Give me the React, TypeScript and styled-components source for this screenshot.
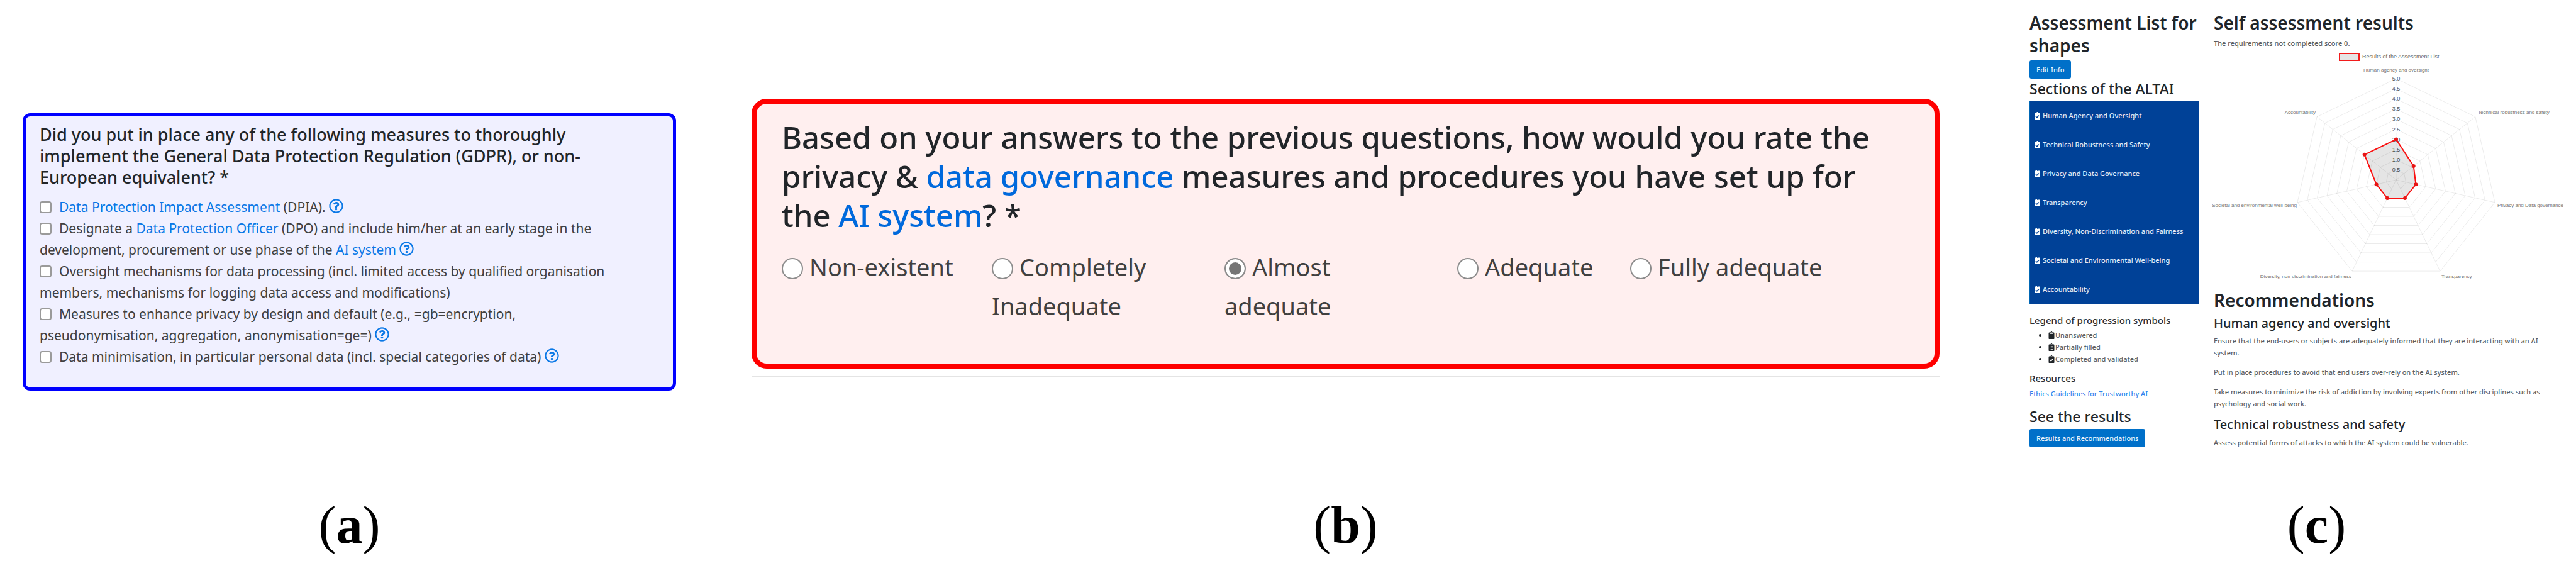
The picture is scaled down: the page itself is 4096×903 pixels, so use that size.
import React from "react";
import styled, { createGlobalStyle } from "styled-components";
import {
  FaClipboard,
  FaClipboardCheck,
  FaClipboardList,
  FaRegQuestionCircle,
} from "react-icons/fa";

const GlobalStyle = createGlobalStyle`
  *, *::before, *::after { box-sizing: border-box; }
  body {
    margin: 0;
    background: #fff;
    color: #404040;
    font-family: "Noto Sans", "Open Sans", sans-serif;
  }
  h1, h2, h3, h4, p, ul, figure, fieldset { margin: 0; padding: 0; }
  button { font-family: inherit; }
`;

/* ---------- page ---------- */

const Page = styled.main`
  display: grid;
  grid-template-columns: 1111fr 2057fr 928fr;
  min-height: 100vh;
`;

const Figure = styled.figure`
  display: flex;
  flex-direction: column;
`;

const QuestionFigure = styled(Figure)`
  && { padding: 180px 36px 20px; }
`;

const RatingFigure = styled(Figure)`
  && { padding: 157px 84px 20px; }
`;

const ResultsFigure = styled(Figure)`
  && { padding: 18px 0 20px 59px; }
`;

const Caption = styled.figcaption<{ $indent?: number }>`
  margin-top: auto;
  padding-left: ${(p) => p.$indent ?? 0}px;
  color: #000;
  font-family: "Liberation Serif", serif;
  font-size: 84px;
  line-height: 96px;
  text-align: center;
`;

/* ---------- question cards ---------- */

const Card = styled.fieldset`
  min-width: 0;
  border-style: solid;
`;

const MeasuresCard = styled(Card)`
  && { padding: 12px 22px 32px; }
  border: 5px solid #0000ff;
  border-radius: 12px;
  background: #f0f0ff;
`;

const RatingCard = styled(Card)`
  && { padding: 22px 36px 61px 40px; }
  border: 8px solid #ff0000;
  border-radius: 24px;
  background: #ffefef;
`;

const CardLink = styled.a`
  color: #0a78e6;
  text-decoration: none;
`;

const MeasuresTitle = styled.h2`
  color: #212529;
  font-size: 27px;
  font-weight: 500;
  line-height: 34px;
`;

const MeasureList = styled.div`
  margin-top: 13px;
  font-size: 21px;
  font-weight: 450;
  line-height: 34px;
`;

const CheckBox = styled.input`
  appearance: none;
  width: 19px;
  height: 19px;
  margin: 0 12px 0 0;
  border: 2px solid #9a9a9a;
  border-radius: 4px;
  background: #fff;
  vertical-align: -2px;
`;

const HelpButton = styled.button`
  width: 23px;
  height: 23px;
  padding: 0;
  border: 0;
  background: none;
  color: #0a78e6;
  font-size: 23px;
  line-height: 0;
  vertical-align: -2px;
`;

const RatingTitle = styled.h2`
  color: #212529;
  font-size: 49px;
  font-weight: 500;
  line-height: 62px;
  a { color: #0069dc; }
`;

const RatingOptions = styled.div`
  display: grid;
  grid-template-columns: 334fr 370fr 370fr 275fr 448fr;
  margin-top: 20px;
  font-size: 38px;
  font-weight: 450;
  line-height: 62px;
`;

const Radio = styled.input`
  appearance: none;
  width: 34px;
  height: 34px;
  margin: 0 10px 0 0;
  border: 2px solid #8c8c8c;
  border-radius: 50%;
  background: #fff;
  vertical-align: -5px;
  &:checked {
    background: #757575;
    box-shadow: inset 0 0 0 5px #fff;
  }
`;

const Rule = styled.hr`
  width: 100%;
  height: 2px;
  margin: 12px 0 0;
  border: 0;
  background: #e4e4e4;
`;

/* ---------- results page ---------- */

const Results = styled.div`
  display: grid;
  grid-template-columns: 270px 1fr;
  column-gap: 23px;
  font-size: 11px;
  font-weight: 500;
  line-height: 19px;
`;

const Sidebar = styled.aside`
  display: flex;
  flex-direction: column;
  align-items: flex-start;
`;

const Content = styled.section`
  min-width: 0;
  p { color: #5c5f63; }
`;

const PageTitle = styled.h1`
  color: #212529;
  font-size: 28px;
  font-weight: 600;
  line-height: 36px;
`;

const SideTitle = styled.h2<{ $top: number }>`
  && { margin-top: ${(p) => p.$top}px; }
  color: #212529;
  font-size: 23px;
  font-weight: 500;
  line-height: 28px;
`;

const SmallTitle = styled.h3<{ $top: number }>`
  && { margin-top: ${(p) => p.$top}px; }
  color: #2c3035;
  font-size: 15px;
  font-weight: 500;
  line-height: 18px;
`;

const TopicTitle = styled.h3<{ $top: number }>`
  && { margin-top: ${(p) => p.$top}px; }
  color: #212529;
  font-size: 20px;
  font-weight: 500;
  line-height: 24px;
`;

const BlueButton = styled.button`
  height: 29px;
  margin-top: 6px;
  padding: 0 11px;
  border: 0;
  border-radius: 3px;
  background: #0070c9;
  color: #e6f2fb;
  font-size: 11px;
  font-weight: 500;
  white-space: nowrap;
`;

const SectionNav = styled.nav`
  display: flex;
  flex-direction: column;
  align-self: stretch;
  margin-top: 5px;
  border: 1px solid #0067b5;
  background: #004197;
`;

const SectionLink = styled.a`
  display: flex;
  align-items: center;
  gap: 4px;
  padding-left: 7px;
  color: #e3ecf8;
  line-height: 46px;
  text-decoration: none;
  white-space: nowrap;
  svg { width: 9px; height: 12px; color: #fff; }
`;

const LegendList = styled.ul`
  && { margin-top: 5px; padding-left: 30px; }
  li::marker { color: #212529; }
  li { color: #5c5f63; }
  svg { width: 10px; height: 12px; margin-right: 1px; color: #212529; vertical-align: -2px; }
`;

const ResourceLink = styled.a`
  margin-top: 6px;
  color: #2f86ee;
  text-decoration: none;
`;

const Paragraph = styled.p<{ $top: number }>`
  && { margin-top: ${(p) => p.$top}px; }
`;

const ChartTitle = styled(PageTitle)`
  && { margin-top: 13px; }
`;

const Chart = styled.svg`
  display: block;
  overflow: visible;
  font-family: "Liberation Sans", sans-serif;
  font-weight: 400;
`;

const CX = 290;
const CY = 208;
const R = 161;

const at = (i: number, value: number): [number, number] => {
  const angle = (i * 2 * Math.PI) / 7;
  const r = (R * value) / 5;
  return [CX + r * Math.sin(angle), CY - r * Math.cos(angle)];
};

const ring = (values: number[]) =>
  values.map((v, i) => at(i, v).map((n) => n.toFixed(1)).join(",")).join(" ");

const SCORES = [2, 1.1, 1, 1, 1, 1, 2];
const STEPS = [0.5, 1, 1.5, 2, 2.5, 3, 3.5, 4, 4.5, 5];

const AXES: { text: string; x: number; y: number; anchor: "start" | "middle" | "end" }[] = [
  { text: "Human agency and oversight", x: 290, y: 36, anchor: "middle" },
  { text: "Technical robustness and safety", x: 420, y: 103, anchor: "start" },
  { text: "Privacy and Data governance", x: 451, y: 251, anchor: "start" },
  { text: "Transparency", x: 362, y: 364, anchor: "start" },
  { text: "Diversity, non-discrimination and fairness", x: 219, y: 364, anchor: "end" },
  { text: "Societal and environmental well-being", x: 132, y: 251, anchor: "end" },
  { text: "Accountability", x: 162, y: 103, anchor: "end" },
];

function RadarChart() {
  return (
    <Chart width="568" height="368" viewBox="0 0 568 368" role="img" aria-label="Results of the Assessment List">
      <rect x="200" y="7" width="31" height="11" fill="#e5e5e5" stroke="#f21c1c" strokeWidth="2" />
      <text x="236" y="15" fontSize="9" fill="#666">Results of the Assessment List</text>
      {STEPS.map((s) => (
        <polygon key={s} points={ring(Array(7).fill(s))} fill="none" stroke="#000" strokeOpacity="0.08" />
      ))}
      {AXES.map((a, i) => {
        const [x, y] = at(i, 5);
        return <line key={a.text} x1={CX} y1={CY} x2={x} y2={y} stroke="#000" strokeOpacity="0.08" />;
      })}
      {STEPS.map((s) => {
        const y = CY - (R * s) / 5;
        return (
          <g key={s}>
            <rect x={CX - 8} y={y - 6} width="16" height="12" fill="#fff" fillOpacity="0.75" />
            <text x={CX} y={y + 3} fontSize="9" fill="#555" textAnchor="middle">{s.toFixed(1)}</text>
          </g>
        );
      })}
      <polygon points={ring(SCORES)} fill="#000" fillOpacity="0.1" stroke="#fa1010" strokeWidth="2" strokeLinejoin="round" />
      {SCORES.map((v, i) => {
        const [x, y] = at(i, v);
        return <circle key={i} cx={x} cy={y} r="3" fill="#e81414" />;
      })}
      {AXES.map((a) => (
        <text key={a.text} x={a.x} y={a.y} fontSize="8" fill="#777" textAnchor={a.anchor}>{a.text}</text>
      ))}
    </Chart>
  );
}

const SECTIONS = [
  "Human Agency and Oversight",
  "Technical Robustness and Safety",
  "Privacy and Data Governance",
  "Transparency",
  "Diversity, Non-Discrimination and Fairness",
  "Societal and Environmental Well-being",
  "Accountability",
];

const RATINGS: React.ReactNode[] = [
  "Non-existent",
  <>Completely<br />Inadequate</>,
  <>Almost<br />adequate</>,
  "Adequate",
  "Fully adequate",
];

function Help() {
  return (
    <HelpButton type="button" aria-label="Help">
      <FaRegQuestionCircle />
    </HelpButton>
  );
}

function Measure({ id, children }: { id: string; children: React.ReactNode }) {
  return (
    <div>
      <CheckBox type="checkbox" id={id} />
      <label htmlFor={id}>{children}</label>
    </div>
  );
}

export default function App() {
  return (
    <>
      <GlobalStyle />
      <Page>
        <QuestionFigure>
          <MeasuresCard>
            <MeasuresTitle>
              Did you put in place any of the following measures to thoroughly<br />
              implement the General Data Protection Regulation (GDPR), or non-<br />
              European equivalent? *
            </MeasuresTitle>
            <MeasureList>
              <Measure id="dpia">
                <CardLink href="#dpia">Data Protection Impact Assessment</CardLink> (DPIA). <Help />
              </Measure>
              <Measure id="dpo">
                Designate a <CardLink href="#dpo">Data Protection Officer</CardLink> (DPO) and include him/her at an early stage in the<br />
                development, procurement or use phase of the <CardLink href="#ai">AI system</CardLink> <Help />
              </Measure>
              <Measure id="oversight">
                Oversight mechanisms for data processing (incl. limited access by qualified organisation<br />
                members, mechanisms for logging data access and modifications)
              </Measure>
              <Measure id="design">
                Measures to enhance privacy by design and default (e.g., =gb=encryption,<br />
                pseudonymisation, aggregation, anonymisation=ge=) <Help />
              </Measure>
              <Measure id="minimisation">
                Data minimisation, in particular personal data (incl. special categories of data) <Help />
              </Measure>
            </MeasureList>
          </MeasuresCard>
          <Caption>(<b>a</b>)</Caption>
        </QuestionFigure>

        <RatingFigure>
          <RatingCard>
            <RatingTitle>
              Based on your answers to the previous questions, how would you rate the<br />
              privacy &amp; <CardLink href="#governance">data governance</CardLink> measures and procedures you have set up for<br />
              the <CardLink href="#ai">AI system</CardLink>? *
            </RatingTitle>
            <RatingOptions>
              {RATINGS.map((text, i) => (
                <label key={i}>
                  <Radio type="radio" name="rating" defaultChecked={i === 2} />
                  {text}
                </label>
              ))}
            </RatingOptions>
          </RatingCard>
          <Rule />
          <Caption>(<b>b</b>)</Caption>
        </RatingFigure>

        <ResultsFigure>
          <Results>
            <Sidebar>
              <PageTitle>Assessment List for<br />shapes</PageTitle>
              <BlueButton type="button">Edit Info</BlueButton>
              <SideTitle $top={2}>Sections of the ALTAI</SideTitle>
              <SectionNav>
                {SECTIONS.map((s) => (
                  <SectionLink key={s} href="#section"><FaClipboardCheck />{s}</SectionLink>
                ))}
              </SectionNav>
              <SmallTitle $top={16}>Legend of progression symbols</SmallTitle>
              <LegendList>
                <li><FaClipboard />Unanswered</li>
                <li><FaClipboardList />Partially filled</li>
                <li><FaClipboardCheck />Completed and validated</li>
              </LegendList>
              <SmallTitle $top={12}>Resources</SmallTitle>
              <ResourceLink href="#guidelines">Ethics Guidelines for Trustworthy AI</ResourceLink>
              <SideTitle $top={13}>See the results</SideTitle>
              <BlueButton type="button">Results and Recommendations</BlueButton>
            </Sidebar>
            <Content>
              <PageTitle>Self assessment results</PageTitle>
              <Paragraph $top={5}>The requirements not completed score 0.</Paragraph>
              <RadarChart />
              <ChartTitle as="h2">Recommendations</ChartTitle>
              <TopicTitle $top={7}>Human agency and oversight</TopicTitle>
              <Paragraph $top={6}>
                Ensure that the end-users or subjects are adequately informed that they are interacting with an AI<br />
                system.
              </Paragraph>
              <Paragraph $top={12}>Put in place procedures to avoid that end users over-rely on the AI system.</Paragraph>
              <Paragraph $top={12}>
                Take measures to minimize the risk of addiction by involving experts from other disciplines such as<br />
                psychology and social work.
              </Paragraph>
              <TopicTitle $top={12}>Technical robustness and safety</TopicTitle>
              <Paragraph $top={7}>Assess potential forms of attacks to which the AI system could be vulnerable.</Paragraph>
            </Content>
          </Results>
          <Caption $indent={44}>(<b>c</b>)</Caption>
        </ResultsFigure>
      </Page>
    </>
  );
}
